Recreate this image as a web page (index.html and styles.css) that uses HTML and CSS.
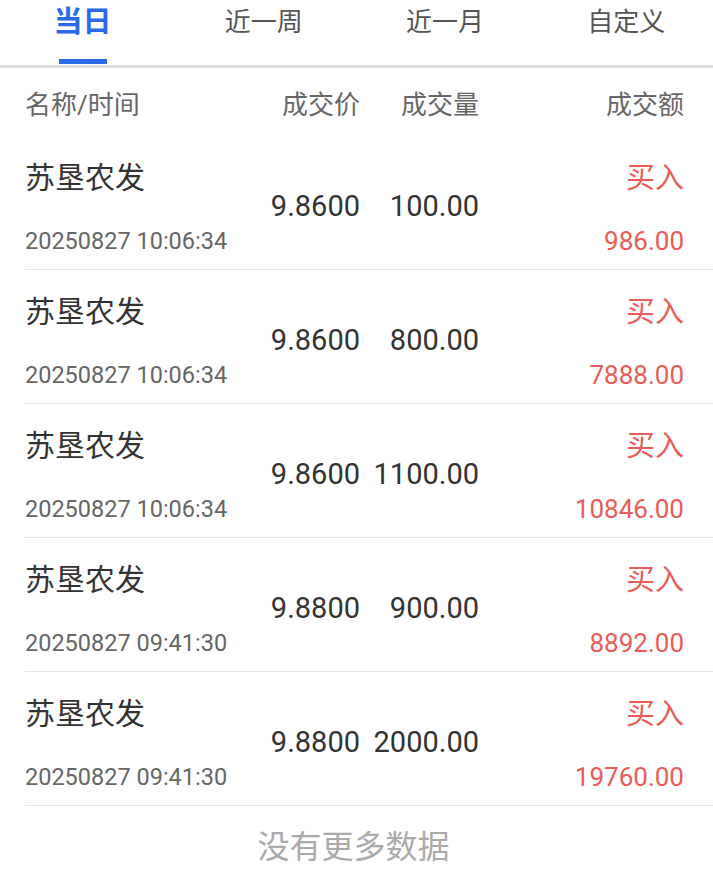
FILE: index.html
```html
<!DOCTYPE html>
<html>
<head>
<meta charset="utf-8">
<link rel="stylesheet" href="styles.css">
</head>
<body>
    <div class="tabs">
        <div class="tab active">当日</div>
        <div class="tab">近一周</div>
        <div class="tab">近一月</div>
        <div class="tab">自定义</div>
    </div>

    <div class="head">
        <span>名称/时间</span>
        <span class="num">成交价</span>
        <span class="num">成交量</span>
        <span class="num">成交额</span>
    </div>

    <div class="list">
        <div class="row">
            <div class="left">
                <span class="name">苏垦农发</span>
                <span class="date">20250827 10:06:34</span>
            </div>
            <span class="val">9.8600</span>
            <span class="val">100.00</span>
            <div class="right">
                <span class="type">买入</span>
                <span class="amount">986.00</span>
            </div>
        </div>
        <div class="row">
            <div class="left">
                <span class="name">苏垦农发</span>
                <span class="date">20250827 10:06:34</span>
            </div>
            <span class="val">9.8600</span>
            <span class="val">800.00</span>
            <div class="right">
                <span class="type">买入</span>
                <span class="amount">7888.00</span>
            </div>
        </div>
        <div class="row">
            <div class="left">
                <span class="name">苏垦农发</span>
                <span class="date">20250827 10:06:34</span>
            </div>
            <span class="val">9.8600</span>
            <span class="val">1100.00</span>
            <div class="right">
                <span class="type">买入</span>
                <span class="amount">10846.00</span>
            </div>
        </div>
        <div class="row">
            <div class="left">
                <span class="name">苏垦农发</span>
                <span class="date">20250827 09:41:30</span>
            </div>
            <span class="val">9.8800</span>
            <span class="val">900.00</span>
            <div class="right">
                <span class="type">买入</span>
                <span class="amount">8892.00</span>
            </div>
        </div>
        <div class="row">
            <div class="left">
                <span class="name">苏垦农发</span>
                <span class="date">20250827 09:41:30</span>
            </div>
            <span class="val">9.8800</span>
            <span class="val">2000.00</span>
            <div class="right">
                <span class="type">买入</span>
                <span class="amount">19760.00</span>
            </div>
        </div>
    </div>

    <div class="nomore">没有更多数据</div>
</body>
</html>
```

FILE: styles.css
```css
body {
    margin: 0;
    background: #fff;
    font-family: Roboto, "Noto Sans CJK SC", sans-serif;
    color: #333;
}
.tabs {
    display: grid;
    grid-template-columns: repeat(4, 1fr);
    height: 65px;
    margin: 0 -4px 0 -8px;
    border-bottom: 3px solid #dcdcdc;
}
.tab {
    position: relative;
    text-align: center;
    font-size: 26px;
    line-height: 45px;
    color: #555;
}
.tab.active {
    color: #2a6ae8;
    font-weight: bold;
    font-size: 29px;
}
.tab.active:after {
    content: "";
    position: absolute;
    left: 50%;
    top: 59px;
    width: 48px;
    height: 5px;
    margin-left: -24px;
    background: #2a6ae8;
}
.head,
.row {
    display: grid;
    grid-template-columns: 1fr 100px 119px 205px;
    padding: 0 29px 0 0;
    margin-left: 25px;
}
.head {
    height: 68px;
    align-items: center;
    font-size: 26px;
    color: #666;
}
.num {
    text-align: right;
}
.row {
    height: 133px;
    align-items: center;
    border-bottom: 1px solid #e4e4e4;
}
.left,
.right {
    display: flex;
    flex-direction: column;
    align-self: stretch;
    white-space: nowrap;
}
.right {
    align-items: flex-end;
}
.name,
.type {
    margin-top: 22px;
    line-height: 40px;
    font-size: 30px;
}
.type {
    color: #e95c58;
    font-size: 29px;
}
.date,
.amount {
    margin-top: 28px;
    line-height: 30px;
    font-size: 23.5px;
    color: #666;
}
.amount {
    font-size: 26px;
    color: #e95c58;
}
.val {
    text-align: right;
    font-size: 29px;
    color: #333;
    margin-top: 6px;
}
.nomore {
    text-align: center;
    font-size: 32px;
    line-height: 82px;
    color: #aaa;
    padding-right: 6px;
}
```
